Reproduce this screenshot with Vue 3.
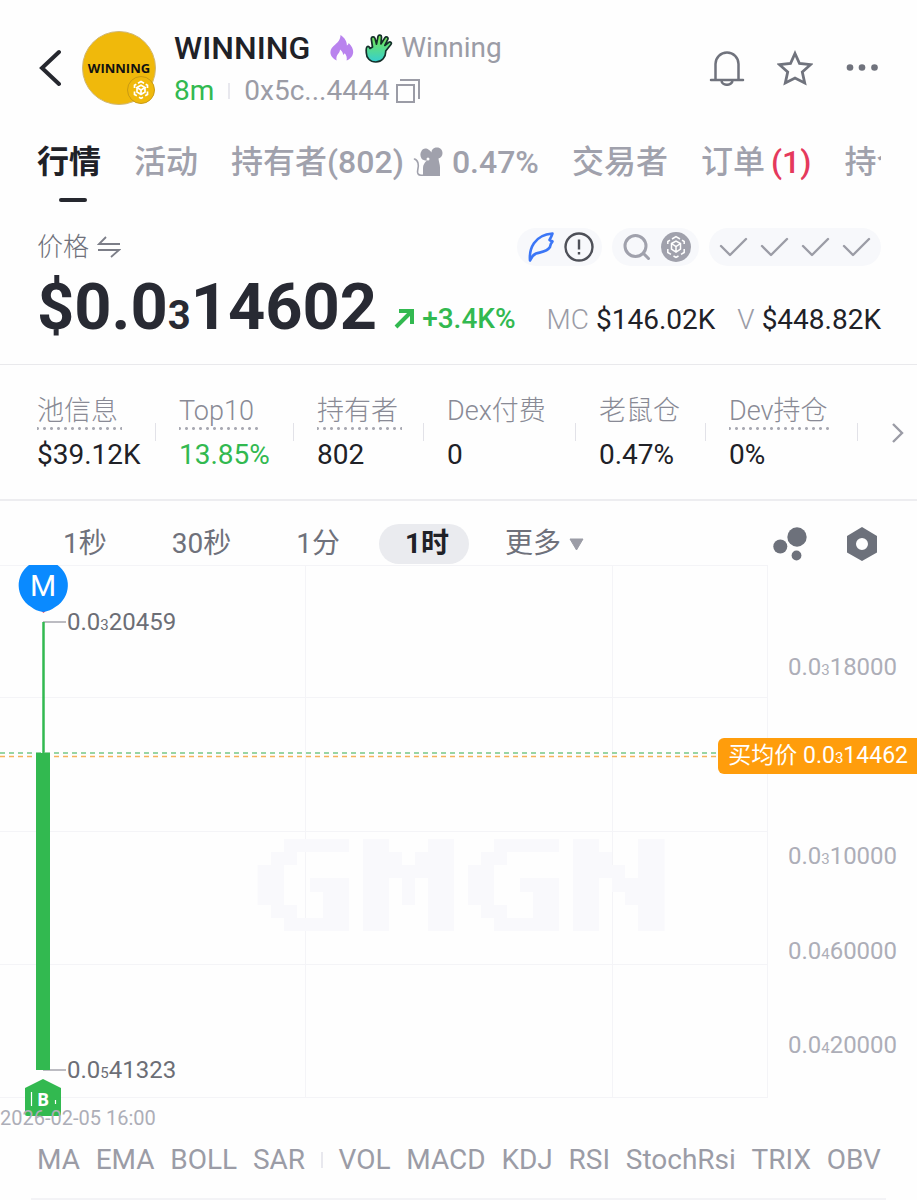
<script setup>
import { ref } from 'vue'

const activeTab = ref('行情')
const activeFrame = ref('1时')
const frames = ['1秒', '30秒', '1分', '1时']

const stats = [
  { label: '池信息', value: '$39.12K', dotted: true },
  { label: 'Top10', value: '13.85%', dotted: true, up: true },
  { label: '持有者', value: '802', dotted: true },
  { label: 'Dex付费', value: '0' },
  { label: '老鼠仓', value: '0.47%' },
  { label: 'Dev持仓', value: '0%', dotted: true },
]

const axis = [
  { zeros: 3, digits: '18000', y: 102 },
  { zeros: 3, digits: '10000', y: 291 },
  { zeros: 4, digits: '60000', y: 386 },
  { zeros: 4, digits: '20000', y: 480 },
]

const mainIndicators = ['MA', 'EMA', 'BOLL', 'SAR']
const subIndicators = ['VOL', 'MACD', 'KDJ', 'RSI', 'StochRsi', 'TRIX', 'OBV']

/* Pixel logo, one character per cell */
const logo = [
  '..##### ##...## ..##### ##...##',
  '.##.... ###.### .##.... ###..##',
  '##..... ####### ##..... ####.##',
  '##..### ##.#.## ##..### ##.####',
  '##...## ##.#.## ##...## ##..###',
  '.##..## ##...## .##..## ##...##',
  '..##### ##...## ..##### ##...##',
]
const cells = logo.flatMap((row, y) =>
  [...row].flatMap((c, x) => (c === '#' ? [{ x, y }] : []))
)
</script>

<template>
  <main class="page">
    <header class="head">
      <button class="icon-btn back" aria-label="返回">
        <svg width="24" height="40" viewBox="0 0 24 40"><path d="M22 4 5 20l17 16" fill="none" stroke="#26282f" stroke-width="4" stroke-linecap="round" /></svg>
      </button>
      <div class="avatar">
        <span>WINNING</span>
        <svg class="chain" viewBox="0 0 28 28">
          <circle cx="14" cy="14" r="13.5" fill="#f0b90b" stroke="#c99a14" />
          <g fill="none" stroke="#fff" stroke-width="1.7">
            <path d="M11 7.2 14 5.5l3 1.7M7.5 12V9.3L9.3 8.200M20.500 12V9.300L18.700 8.200M7.500 15.500V18.500l2.300 1.300M20.500 15.500V18.500l-2.300 1.300M12 21.300l2 1.100 2-1.100" />
            <path d="M10 11.500 14 9.200l4 2.300-4 2.400zM10 11.500v4.500l4 2.400 4-2.400v-4.500M14 14v5" />
          </g>
        </svg>
      </div>
      <div class="ident">
        <div class="line">
          <h1>WINNING</h1>
          <svg class="flame" width="24" height="26" viewBox="0 0 24 26"><path d="M10.500 0c-.2 5-2.500 7-5.200 9.500C2.500 12 .4 14 .4 17.300c0 3.500 2.600 6.700 6.200 8.200-.7-2.800.2-4.800 1.400-6.500 1.200-1.500 2-2.500 2-4.500 2 1.500 3 3.200 3.200 5.500l1.600-1.800c1.500 2 2.500 4.500 1.800 7.300 3.600-1.300 6.400-4.500 6.600-8.200.2-3.300-1.600-6.300-4.500-9.300-.2 1.200-.8 2-1.800 2.600C17 6.500 14.500 2.500 10.500 0z" fill="#b983ee" /></svg>
          <svg class="hand" width="28" height="29" viewBox="0 0 28 29">
            <defs><linearGradient id="handFill" x1="0" y1="0" x2="0" y2="1"><stop offset="0" stop-color="#79e84a" /><stop offset="1" stop-color="#35cfd0" /></linearGradient></defs>
            <path d="M7.500 13 6.300 5c-.3-2.600 3-3 3.700-.6l1.500 5.800 1.500-7.700c.5-2.200 3.600-1.700 3.500.6l-.6 6.900 4-6.300c1.200-1.800 3.800-.4 2.900 1.700l-3 6.100 4-3.200c1.600-1.200 3.400.6 2.100 2.200l-5.200 6.500c.3 6-3.800 11-9.900 11C5 28 1.300 23.700 1.300 18.700c0-2-.6-4.900.7-5.900 1.500-1 2.600.2 3 1.700z" fill="url(#handFill)" stroke="#14302a" stroke-width="1.700" stroke-linejoin="round" />
          </svg>
          <span class="muted">Winning</span>
        </div>
        <div class="line">
          <span class="up">8m</span><i class="bar"></i><span class="muted">0x5c...4444</span>
          <button class="icon-btn copy" aria-label="复制">
            <svg width="24" height="24" viewBox="0 0 24 24" fill="none" stroke="#9b9ca6" stroke-width="2"><path d="M1 6h17v17H1zM4 1h19v19" /></svg>
          </button>
        </div>
      </div>
      <div class="actions">
        <button class="icon-btn" aria-label="提醒">
          <svg width="36" height="36" viewBox="0 0 36 36" fill="none" stroke="#70737d" stroke-width="2.500" stroke-linecap="round"><path d="M2 30h32M6.500 30V14a11.500 11.500 0 0 1 23 0v16M12.500 30.500a5.500 4.300 0 0 0 11 0" /></svg>
        </button>
        <button class="icon-btn" aria-label="收藏">
          <svg width="36" height="36" viewBox="0 0 36 36" fill="none" stroke="#70737d" stroke-width="2.800"><path d="m18 3.500 4.500 10 11 1.200-8.200 7.300 2.400 11L18 28l-9.700 5 2.400-11-8.200-7.300 11-1.200z" /></svg>
        </button>
        <button class="icon-btn" aria-label="更多操作">
          <svg width="36" height="36" viewBox="0 0 36 36" fill="#70737d"><circle cx="5" cy="17.500" r="3.300" /><circle cx="17" cy="17.500" r="3.300" /><circle cx="29.500" cy="17.500" r="3.300" /></svg>
        </button>
      </div>
    </header>

    <nav class="tabs">
      <button class="tab" :class="{ on: activeTab === '行情' }" @click="activeTab = '行情'">行情</button>
      <button class="tab">活动</button>
      <button class="tab">持有者(802)
        <svg class="mouse" width="30" height="30" viewBox="0 0 30 30">
          <path d="M10 29V21c0-3 1.500-5.500 4-7.500-2.500 0-4.500-.5-5.500-2C7 9 7 6 8.500 4 9.500 1.500 13 .5 16 3c1.200.6 2 1.600 2.500 2.500C18.500 2 21 .5 24 .5c3.500 0 5.500 2.500 5.500 5.500 0 2.800-1.500 5-4 5.500.3 3.500 1.500 6 1.500 9v8.500z" fill="#a0a1ac" />
          <circle cx="15" cy="12" r="1.500" fill="#fff" />
          <path d="M11 28.200H8c-3 0-4-2.200-3.300-5 .8-3 1-5 .3-7.200-.6-2-1.700-3.500-3.500-4" fill="none" stroke="#a0a1ac" stroke-width="1.600" stroke-linecap="round" />
        </svg>0.47%</button>
      <button class="tab">交易者</button>
      <button class="tab">订单<span class="count">(1)</span></button>
      <button class="tab">持仓</button>
    </nav>

    <section class="quote">
      <div class="quote-top">
        <button class="unit">价格
          <svg width="24" height="22" viewBox="0 0 24 22" fill="none" stroke="#7c7e88" stroke-width="1.800"><path d="M9 1 2 8h21M1 14h21l-8 7" /></svg>
        </button>
        <div class="pills">
          <div class="pill">
            <svg width="26" height="30" viewBox="0 0 26 30" fill="none" stroke="#3b76f6" stroke-width="2.600" stroke-linejoin="round" stroke-linecap="round"><path d="M2 28.500C1 17 6 3 24.500 1.500c-1 3-1.800 4.500-3 6.500l3 1.500c-2 2-2 3-2.500 5.500-3 5-9 5-14 6.500-3 1.500-5 4-6 7z" /></svg>
            <svg width="30" height="30" viewBox="0 0 30 30" fill="none" stroke="#4e5058" stroke-width="2.400"><circle cx="15" cy="15" r="13.500" /><path d="M15 7.500v10M15 20v2.600" /></svg>
          </div>
          <div class="pill">
            <svg width="28" height="28" viewBox="0 0 28 28" fill="none" stroke="#a0a1ac" stroke-width="3" stroke-linecap="round"><circle cx="12.500" cy="13" r="10.500" /><path d="m20.500 20.500 5 5" /></svg>
            <svg width="30" height="30" viewBox="0 0 30 30"><circle cx="15" cy="15" r="15" fill="#a0a1ac" />
              <g fill="none" stroke="#fff" stroke-width="1.500"><path d="m11 7 4-2.300L19 7M6.800 12V9.500L9 8.200M23.200 12V9.500L21 8.200M6.800 17v3.500L10 22.300M23.200 17v3.500L20 22.300M12.500 24l2.500 1.500 2.500-1.500" /><path d="m10.500 11.500 4.500-2.500 4.500 2.500v5.500L15 20l-4.500-3zM10.500 11.500l4.500 3 4.500-3M15 14.500V20" /></g></svg>
          </div>
          <div class="pill checks">
            <svg v-for="n in 4" :key="n" width="29" height="20" viewBox="0 0 29 20" fill="none" stroke="#9b9ca6" stroke-width="2.400" stroke-linecap="round" stroke-linejoin="round"><path d="m2 9 9 9L27 2" /></svg>
          </div>
        </div>
      </div>
      <div class="price-row">
        <strong class="price">$0.0<small>3</small>14602</strong>
        <span class="change">
          <svg width="21" height="21" viewBox="0 0 21 21" fill="none" stroke="#32b950" stroke-width="4"><path d="M2 19 18 3M5 3h13v13" /></svg>+3.4K%</span>
        <span class="meta first"><span>MC</span>$146.02K</span>
        <span class="meta"><span>V</span>$448.82K</span>
      </div>
    </section>

    <section class="stats">
      <div v-for="s in stats" :key="s.label" class="stat">
        <span class="label" :class="{ dotted: s.dotted }">{{ s.label }}</span>
        <span class="value" :class="{ up: s.up }">{{ s.value }}</span>
      </div>
      <button class="icon-btn next" aria-label="下一页">
        <svg width="14" height="20" viewBox="0 0 14 20" fill="none" stroke="#9b9ca6" stroke-width="2.400"><path d="m2 1 9 9-9 9" /></svg>
      </button>
    </section>

    <section class="frames">
      <button v-for="f in frames" :key="f" class="frame" :class="{ on: f === activeFrame }" @click="activeFrame = f">{{ f }}</button>
      <button class="frame more">更多
        <svg width="15" height="13" viewBox="0 0 15 13"><path d="M1 1h13L7.500 12z" fill="#9b9ca6" stroke="#9b9ca6" stroke-linejoin="round" /></svg>
      </button>
      <div class="tools">
        <button class="icon-btn" aria-label="气泡图">
          <svg width="34" height="34" viewBox="0 0 34 34" fill="#6d717b"><circle cx="24" cy="10" r="9.700" /><circle cx="7.300" cy="19.500" r="7" /><circle cx="23.500" cy="28.500" r="4.900" /></svg>
        </button>
        <button class="icon-btn" aria-label="图表设置">
          <svg width="34" height="36" viewBox="0 0 34 36"><path fill-rule="evenodd" d="m17 1 15 9v16.500l-15 8.500-15-8.500V10zM17 12a6 6 0 1 0 0 12 6 6 0 0 0 0-12z" fill="#6d717b" /></svg>
        </button>
      </div>
    </section>

    <section class="chart">
      <div class="plot">
        <div class="grid"><i v-for="n in 12" :key="n"></i></div>
        <svg class="logo" viewBox="0 0 31 7" role="img" aria-label="GMGN" shape-rendering="crispEdges">
          <rect v-for="c in cells" :key="c.x + '-' + c.y" :x="c.x" :y="c.y" width="1" height="1" fill="#f9f9fc" />
        </svg>
      </div>
      <div class="scale">
        <span v-for="a in axis" :key="a.zeros + a.digits" :style="{ top: a.y + 'px' }">0.0<small>{{ a.zeros }}</small>{{ a.digits }}</span>
      </div>
      <svg class="avg" width="100%" height="6"><path d="M0 1h2000" stroke="#75c886" stroke-width="1.500" stroke-dasharray="5 4" /><path d="M0 4.500h2000" stroke="#f5b25a" stroke-width="1.500" stroke-dasharray="5 4" /></svg>
      <svg class="candle" width="80" height="533" viewBox="0 0 80 533">
        <path d="M43 57h23M43 505h23" stroke="#a6a7ae" stroke-width="1.500" />
        <path d="M43.500 57v140" stroke="#32b950" stroke-width="2.500" />
        <path d="M36 188h14v317H36z" fill="#32b950" />
        <path d="m38 43 5.500 5L49 43z" fill="#ee4466" />
        <path d="M29 0h28.500a25 25 0 0 1-1.500 41.500Q50 46 43.300 47 36 46 30.500 41.500A25 25 0 0 1 29 0z" fill="#0a8aff" />
      </svg>
      <svg class="buy" width="38" height="37" viewBox="0 0 38 37"><path d="M19 0l18 9v26q0 2-2 2H3q-2 0-2-2V9z" fill="#32b950" /><path d="M7.500 13v14M31.500 21v4" stroke="#fff" stroke-width="1.200" /></svg>
      <span class="mark sell-mark">M</span>
      <span class="mark buy-mark">B</span>
      <span class="extreme high">0.0<small>3</small>20459</span>
      <span class="extreme low">0.0<small>5</small>41323</span>
      <span class="tag">买均价 0.0<small>3</small>14462</span>
    </section>
    <time class="date">2026-02-05 16:00</time>

    <nav class="indicators">
      <button v-for="i in mainIndicators" :key="i">{{ i }}</button>
      <i class="bar"></i>
      <button v-for="i in subIndicators" :key="i">{{ i }}</button>
    </nav>
  </main>
</template>

<style>
body { margin: 0; background: #fefefe; }
</style>

<style scoped>
.page {
  font-family: Roboto, "Noto Sans CJK SC", sans-serif;
  font-size: 28px;
  line-height: 36px;
  color: #202127;
  overflow: hidden;
}
button {
  font: inherit;
  color: inherit;
  border: 0;
  padding: 0;
  background: none;
  white-space: nowrap;
  cursor: pointer;
}
svg { display: block; flex: none; }
.icon-btn { display: flex; align-items: center; }
.muted { color: #9b9ca6; }
.up { color: #32b950; }
.bar { width: 2px; height: 16px; background: #e8e8ee; }

.head { display: flex; align-items: center; padding: 26px 36px 0 37px; }
.avatar {
  position: relative;
  display: flex;
  align-items: center;
  justify-content: center;
  box-sizing: border-box;
  width: 74px;
  height: 74px;
  margin: 0 18px 0 21px;
  border: 1px solid #d0b878;
  border-radius: 50%;
  background: #f0b90b;
  color: #111;
  font: 700 13px/20px "Open Sans", "Noto Sans", sans-serif;
}
.chain { position: absolute; right: 0; bottom: 0; width: 28px; height: 28px; }
.ident { display: flex; flex-direction: column; gap: 7px; padding-top: 4px; }
.line { display: flex; align-items: center; }
h1 { margin: 0; font-size: 32px; font-weight: 500; line-height: 36px; }
.flame { margin-left: 20px; }
.hand { margin: 0 8px 0 11px; }
.line .bar { margin: 0 14px; }
.copy { margin-left: 7px; }
.actions { display: flex; gap: 32px; margin-left: auto; }

.tabs {
  display: flex;
  gap: 33px;
  margin: 33px 36px 0 37px;
  height: 62px;
  overflow: hidden;
  font-size: 32px;
  font-weight: 500;
  line-height: 40px;
  color: #a0a1ac;
}
.tab { position: relative; display: flex; align-items: center; flex: none; height: 40px; }
.tab.on { color: #202127; font-weight: 700; }
.tab.on::after {
  content: "";
  position: absolute;
  left: 22px;
  bottom: -20px;
  width: 28px;
  height: 4px;
  border-radius: 2px;
  background: #26282f;
}
.mouse { margin: 0 9px; }
.count { margin-left: 6px; color: #e5395c; }

.quote { padding: 24px 36px 16px 37px; border-bottom: 1px solid #e9e9ec; }
.quote-top { display: flex; align-items: center; justify-content: space-between; }
.unit { display: flex; align-items: center; gap: 8px; font-size: 26px; font-weight: 300; color: #6f717b; }
.pills { display: flex; gap: 10px; }
.pill {
  display: flex;
  align-items: center;
  gap: 10px;
  height: 38px;
  padding: 0 8px 0 11px;
  border-radius: 19px;
  background: #f7f8fb;
}
.checks { gap: 12px; padding: 0 10px; }
.price-row { display: flex; align-items: baseline; margin-top: 9px; }
.price { font-size: 65px; font-weight: 700; line-height: 64px; color: #282a33; }
.price small { font-size: 40px; }
.change { display: flex; align-items: center; gap: 7px; margin-left: 17px; font-weight: 500; color: #32b950; }
.meta { display: flex; gap: 7px; margin-left: 22px; }
.meta.first { margin-left: auto; }
.meta span { color: #9b9ca6; font-weight: 300; }

.stats {
  display: grid;
  grid-template-columns: 142fr 138fr 130fr 152fr 130fr 152fr 36fr;
  padding: 29px 0 27px 37px;
  border-bottom: 2px solid #ededf0;
}
.stat { position: relative; display: flex; flex-direction: column; align-items: flex-start; gap: 8px; }
.stat::after { content: ""; position: absolute; right: 23px; top: 29px; width: 1px; height: 18px; background: #e2e2e8; }
.label { height: 34px; border-bottom: 2px solid transparent; font-size: 27px; font-weight: 300; line-height: 34px; color: #898a95; white-space: nowrap; }
.label.dotted {
  padding-right: 4px;
  border: 0;
  padding-bottom: 2px;
  background: radial-gradient(circle, #a9aab3 1px, transparent 2px) -3px 100% / 7px 3px repeat-x;
}
.value { line-height: 34px; }
.next { justify-self: end; padding-right: 12px; }

.frames { display: flex; align-items: center; padding: 23px 38px 1px 37px; font-size: 28px; color: #6f717b; }
.frame { height: 40px; padding: 0 20px 0 26px; margin-right: 19px; border-radius: 20px; line-height: 40px; }
.frame.on { background: #eaebef; color: #202127; font-weight: 700; }
.more { display: flex; align-items: center; gap: 8px; padding: 0; margin-left: 17px; }
.tools { display: flex; gap: 38px; margin-left: auto; }

.chart { position: relative; display: flex; height: 533px; }
.plot { position: relative; flex: 1; }
.grid { display: grid; grid-template-columns: 306fr 306fr 155fr; grid-template-rows: repeat(4, 1fr); height: 100%; }
.grid i { border-right: 1px solid #f4f4f7; border-bottom: 1px solid #f4f4f7; }
.grid i:nth-child(-n + 3) { border-top: 1px solid #f4f4f7; }
.logo { position: absolute; left: 60%; top: 274px; width: 53%; transform: translateX(-50%); }
.scale { position: relative; width: 149px; font-size: 24px; line-height: 28px; color: #adaeb8; }
.scale span { position: absolute; left: 0; right: 0; margin-top: -14px; text-align: center; }
.avg { position: absolute; left: 0; top: 187px; }
.candle { position: absolute; left: 0; top: 0; }
.buy { position: absolute; left: 24px; top: 514px; }
.mark { position: absolute; left: 24px; width: 38px; text-align: center; color: #fff; }
.sell-mark { top: 3px; font-size: 30px; }
.buy-mark { top: 522px; font: 700 18px/24px "Open Sans", sans-serif; }
.extreme { position: absolute; left: 67px; font-size: 24px; line-height: 28px; color: #6c6e76; }
.high { top: 43px; }
.low { top: 491px; }
.tag {
  position: absolute;
  right: 0;
  top: 173px;
  height: 36px;
  padding: 0 9px 0 10px;
  border-radius: 6px 0 0 6px;
  background: #ff9d0c;
  font-size: 23px;
  color: #fff;
}
.scale small, .extreme small, .tag small { font-size: 15px; }
.date { position: relative; display: block; margin-top: 8px; font-size: 20px; line-height: 24px; color: #adaeb8; }

.indicators {
  display: flex;
  align-items: center;
  justify-content: space-between;
  margin: 12px 31px 0;
  padding: 0 5px 20px 6px;
  border-bottom: 2px solid #f3f3f6;
  color: #9b9ca6;
}
</style>
